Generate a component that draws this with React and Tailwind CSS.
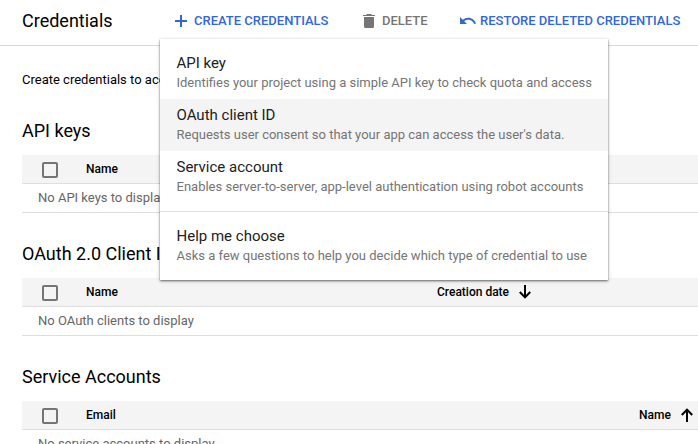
const Checkbox = () => (
  <span className="ml-5 block size-4 rounded-[2px] border-2 border-[#757575] mt-[1px]" />
);

const Arrow = ({ up = false }) => (
  <svg viewBox="0 0 12 14" className={up ? "h-3.5 w-3" : "h-3.5 w-3 rotate-180"} fill="none" stroke="#000" strokeWidth="2">
    <path d="M6 14V1.8M.8 7 6 1.6 11.2 7" />
  </svg>
);

const Section = ({ title, column, empty, children }) => (
  <section className="h-[123px] pl-[22px]">
    <h2 className="flex h-[39px] items-start pt-[3px] text-[18px] leading-6">{title}</h2>
    <div className="flex h-[29px] items-center border-b border-[#dedede] bg-[#f4f4f4] text-[12px] font-medium">
      <Checkbox />
      <span className="ml-7 w-[351px] shrink-0">{column}</span>
      {children}
    </div>
    <div className="flex h-[29px] items-center border-b border-[#dedede] pl-4 text-[13px] text-[#666]">
      {empty}
    </div>
  </section>
);

const MenuItem = ({ title, text, active = false }) => (
  <div className={`h-[52px] whitespace-nowrap pl-[16.500px] pt-[7px] ${active ? "bg-[#f4f4f4]" : ""}`}>
    <div className="text-[15px] leading-[18px] text-[#212121]">{title}</div>
    <div className="text-[13px] leading-[22px] text-[#757575]">{text}</div>
  </div>
);

export default function App() {
  return (
    <div className="relative h-[444px] w-[698px] overflow-hidden bg-white font-[Roboto,sans-serif] text-black">
      <header className="flex h-[46px] items-center whitespace-nowrap border-b border-[#dadada] pb-1 text-[13px] font-medium text-[#3367d6]">
        <h1 className="w-[175px] shrink-0 pl-[22px] text-[18px] font-normal text-black">Credentials</h1>
        <div className="flex w-[188px] shrink-0 items-center">
          <svg viewBox="0 0 12 12" className="size-3" fill="currentColor">
            <path d="M5 0h2v5h5v2H7v5H5V7H0V5h5z" />
          </svg>
          <span className="ml-[7px]">CREATE CREDENTIALS</span>
        </div>
        <div className="flex w-24 shrink-0 items-center text-[#757575]">
          <svg viewBox="0 0 12 14" className="h-3.5 w-3" fill="currentColor">
            <path d="M4 0h4l1 1h3v1H0V1h3zM1 3h10v9.5A1.5 1.5 0 0 1 9.500 14h-7A1.500 1.500 0 0 1 1 12.500z" />
          </svg>
          <span className="ml-[7px]">DELETE</span>
        </div>
        <div className="flex items-center">
          <svg viewBox="2 7 20.5 9" className="ml-px h-[7px] w-[16px]" fill="currentColor">
            <path d="M12.5 8c-2.650 0-5.050.990-6.900 2.600L2 7v9h9l-3.620-3.620c1.390-1.160 3.160-1.880 5.120-1.880 3.540 0 6.550 2.310 7.600 5.500l2.370-.780C21.080 11.030 17.150 8 12.500 8z" />
          </svg>
          <span className="ml-1">RESTORE DELETED CREDENTIALS</span>
        </div>
      </header>
      <p className="h-[70px] pl-[22px] pt-6 text-[13px] leading-5">Create credentials to acc</p>
      <Section title="API keys" column="Name" empty="No API keys to display" />
      <Section title="OAuth 2.0 Client IDs" column="Name" empty="No OAuth clients to display">
        <span className="mr-[10px]">Creation date</span>
        <Arrow />
      </Section>
      <Section title="Service Accounts" column="Email" empty="No service accounts to display">
        <span className="ml-[202px] mr-[10px]">Name</span>
        <Arrow up />
      </Section>
      <div className="absolute left-[160px] top-[39px] h-[241px] w-[448px] bg-white py-2 shadow-[0_1px_2px_rgba(0,0,0,0.55),0_1px_5px_rgba(0,0,0,0.12)]">
        <MenuItem title="API key" text="Identifies your project using a simple API key to check quota and access" />
        <MenuItem active title="OAuth client ID" text="Requests user consent so that your app can access the user's data." />
        <MenuItem title="Service account" text="Enables server-to-server, app-level authentication using robot accounts" />
        <div className="my-2 h-px bg-[#e2e2e2]" />
        <MenuItem title="Help me choose" text="Asks a few questions to help you decide which type of credential to use" />
      </div>
    </div>
  );
}
